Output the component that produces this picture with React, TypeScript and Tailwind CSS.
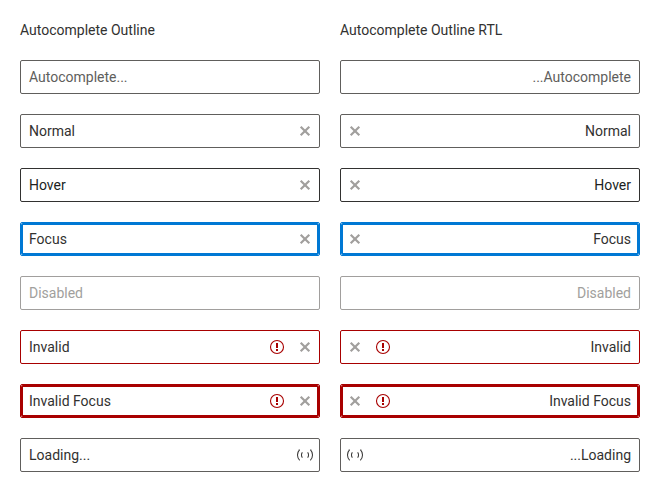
import React from "react";

type State = "placeholder" | "normal" | "hover" | "focus" | "disabled" | "invalid" | "invalidFocus" | "loading";

interface Field {
  state: State;
  text: string;
  rtlText: string;
}

const fields: Field[] = [
  { state: "placeholder", text: "Autocomplete...", rtlText: "...Autocomplete" },
  { state: "normal", text: "Normal", rtlText: "Normal" },
  { state: "hover", text: "Hover", rtlText: "Hover" },
  { state: "focus", text: "Focus", rtlText: "Focus" },
  { state: "disabled", text: "Disabled", rtlText: "Disabled" },
  { state: "invalid", text: "Invalid", rtlText: "Invalid" },
  { state: "invalidFocus", text: "Invalid Focus", rtlText: "Invalid Focus" },
  { state: "loading", text: "Loading...", rtlText: "...Loading" },
];

const stateStyles: Record<State, string> = {
  placeholder: "border-[#605e5c] text-[#605e5c]",
  normal: "border-[#605e5c] text-[#323130]",
  hover: "border-[#323130] text-[#201f1e]",
  focus: "border-[#0078d4] text-[#323130]",
  disabled: "border-[#a19f9d] text-[#a19f9d]",
  invalid: "border-[#a80000] text-[#323130]",
  invalidFocus: "border-[#a80000] text-[#323130]",
  loading: "border-[#605e5c] text-[#323130]",
};

function ClearIcon() {
  return (
    <svg className="size-4 text-[#a19f9d]" viewBox="0 0 16 16" fill="none" stroke="currentColor" strokeWidth="2.2">
      <path d="m3.7 3.7 8.6 8.6M12.3 3.7l-8.6 8.6" />
    </svg>
  );
}

function WarningIcon() {
  return (
    <svg className="size-4 text-[#a80000]" viewBox="0 0 16 16" fill="currentColor">
      <circle cx="8" cy="8" r="6.5" fill="none" stroke="currentColor" strokeWidth="1.1" />
      <path d="M7 4h2v5H7zM7 10h2v2H7z" />
    </svg>
  );
}

function Loader() {
  return (
    <span className="grid size-4 place-items-center">
      <span className="col-start-1 row-start-1 size-4 rounded-full border border-current border-y-transparent" />
      <span className="col-start-1 row-start-1 size-2 rounded-full border border-current border-y-transparent" />
    </span>
  );
}

function AutoComplete({ field, rtl }: { field: Field; rtl: boolean }) {
  const { state } = field;
  const clearable = ["normal", "hover", "focus", "invalid", "invalidFocus"].includes(state);
  const invalid = state === "invalid" || state === "invalidFocus";
  const focused = state === "focus" || state === "invalidFocus";
  return (
    <div
      className={`relative flex h-[34px] items-center rounded-[2px] border px-[6px] ${rtl ? "flex-row-reverse" : ""} ${stateStyles[state]}`}
    >
      <span className={`grow px-[2px] ${rtl ? "text-right" : ""}`}>{rtl ? field.rtlText : field.text}</span>
      <span className={`flex items-center gap-3 ${rtl ? "flex-row-reverse" : ""}`}>
        {invalid && <WarningIcon />}
        {clearable && <ClearIcon />}
        {state === "loading" && <Loader />}
      </span>
      {focused && <span className="pointer-events-none absolute inset-0 rounded-[2px] border-2 border-inherit" />}
    </div>
  );
}

function Column({ title, rtl }: { title: string; rtl: boolean }) {
  return (
    <section className="flex w-[300px] flex-col gap-5">
      <h2 className="h-5">{title}</h2>
      {fields.map((field) => (
        <AutoComplete key={field.state} field={field} rtl={rtl} />
      ))}
    </section>
  );
}

export default function App() {
  return (
    <main className="flex h-[492px] w-[660px] gap-5 bg-white p-5 font-['Roboto',sans-serif] text-[14px] leading-5 text-[#323130] antialiased">
      <Column title="Autocomplete Outline" rtl={false} />
      <Column title="Autocomplete Outline RTL" rtl />
    </main>
  );
}
